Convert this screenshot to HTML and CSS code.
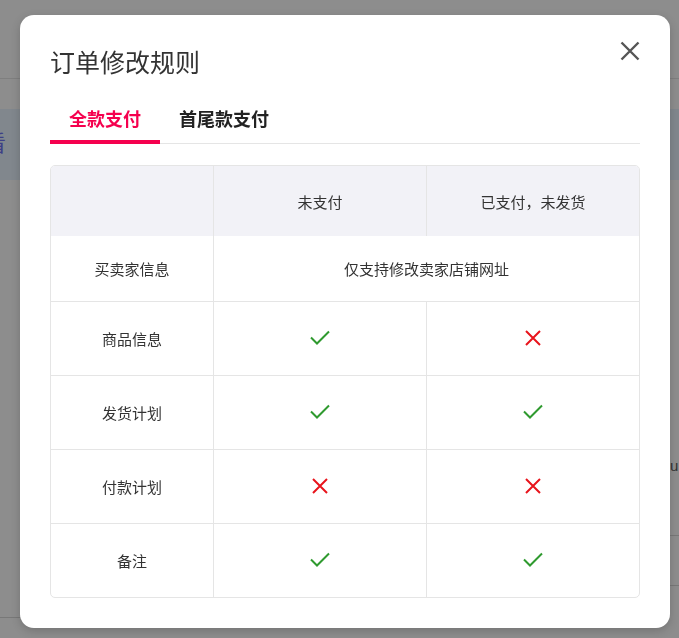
FILE: index.html
```html
<!DOCTYPE html>
<html lang="zh-CN">
<head>
<meta charset="utf-8">
<title>订单修改规则</title>
<link rel="stylesheet" href="styles.css">
</head>
<body>
<div class="page">
  <div class="topbar"></div>
  <div class="band"><span class="band-text">查看</span></div>
  <div class="stub-right stub-u"><span>u</span></div>
  <div class="stub-right stub-line1"></div>
  <div class="stub-right stub-line2"></div>
  <div class="stub-left"></div>
</div>

<div class="modal">
  <button class="close" aria-label="关闭">
    <svg width="20" height="20" viewBox="0 0 20 20"><path d="M1.5 1.5L18.5 18.5M18.5 1.5L1.5 18.5" stroke="#555" stroke-width="2.4" stroke-linecap="butt" fill="none"/></svg>
  </button>
  <h1 class="title">订单修改规则</h1>
  <div class="tabs">
    <div class="tab active">全款支付</div>
    <div class="tab">首尾款支付</div>
  </div>
  <div class="grid">
    <div class="cell head"></div>
    <div class="cell head">未支付</div>
    <div class="cell head last">已支付，未发货</div>

    <div class="cell r1">买卖家信息</div>
    <div class="cell r1 span last">仅支持修改卖家店铺网址</div>

    <div class="cell">商品信息</div>
    <div class="cell"><svg class="ok" width="20" height="15" viewBox="0 0 20 15"><path d="M1 7.5L7 13.5L19 1.5" stroke="#2f9a2f" stroke-width="2" fill="none"/></svg></div>
    <div class="cell last"><svg class="no" width="16" height="16" viewBox="0 0 16 16"><path d="M1 1L15 15M15 1L1 15" stroke="#e8141c" stroke-width="2" fill="none"/></svg></div>

    <div class="cell">发货计划</div>
    <div class="cell"><svg class="ok" width="20" height="15" viewBox="0 0 20 15"><path d="M1 7.5L7 13.5L19 1.5" stroke="#2f9a2f" stroke-width="2" fill="none"/></svg></div>
    <div class="cell last"><svg class="ok" width="20" height="15" viewBox="0 0 20 15"><path d="M1 7.5L7 13.5L19 1.5" stroke="#2f9a2f" stroke-width="2" fill="none"/></svg></div>

    <div class="cell">付款计划</div>
    <div class="cell"><svg class="no" width="16" height="16" viewBox="0 0 16 16"><path d="M1 1L15 15M15 1L1 15" stroke="#e8141c" stroke-width="2" fill="none"/></svg></div>
    <div class="cell last"><svg class="no" width="16" height="16" viewBox="0 0 16 16"><path d="M1 1L15 15M15 1L1 15" stroke="#e8141c" stroke-width="2" fill="none"/></svg></div>

    <div class="cell bottom">备注</div>
    <div class="cell bottom"><svg class="ok" width="20" height="15" viewBox="0 0 20 15"><path d="M1 7.5L7 13.5L19 1.5" stroke="#2f9a2f" stroke-width="2" fill="none"/></svg></div>
    <div class="cell bottom last"><svg class="ok" width="20" height="15" viewBox="0 0 20 15"><path d="M1 7.5L7 13.5L19 1.5" stroke="#2f9a2f" stroke-width="2" fill="none"/></svg></div>
  </div>
</div>
</body>
</html>
```

FILE: styles.css
```css
* { box-sizing: border-box; }
html, body {
  margin: 0;
  padding: 0;
  width: 679px;
  height: 638px;
  overflow: hidden;
  background: #8d8d8d;
  font-family: "Noto Sans CJK SC", "Noto Sans", sans-serif;
}
.page {
  width: 679px;
  height: 638px;
  display: flex;
  flex-direction: column;
}
.topbar {
  height: 79px;
  border-bottom: 1px solid #7f7f7f;
}
.band {
  margin-top: 30px;
  height: 71px;
  background: #81878d;
  display: flex;
  align-items: flex-start;
  padding-top: 17px;
  overflow: hidden;
}
.band-text {
  margin-left: -38px;
  font-size: 22px;
  line-height: 30px;
  color: #3d3f86;
  white-space: nowrap;
}
.stub-right {
  margin-left: 640px;
}
.stub-u {
  margin-top: 276px;
  height: 20px;
  font-family: "Liberation Sans", sans-serif;
  font-size: 15px;
  line-height: 20px;
  color: #333;
  padding-left: 30px;
}
.stub-line1 {
  margin-top: 59px;
  border-top: 1px solid #787878;
}
.stub-line2 {
  margin-top: 49px;
  border-top: 1px solid #787878;
}
.stub-left {
  margin-top: 31px;
  width: 40px;
  border-top: 1px solid #787878;
}

.modal {
  position: fixed;
  left: 20px;
  top: 15px;
  width: 650px;
  height: 613px;
  background: #fff;
  border-radius: 14px;
  box-shadow: 0 3px 10px rgba(0,0,0,0.18);
  padding: 30px 30px 0 30px;
}
.close {
  position: absolute;
  right: 30px;
  top: 26px;
  width: 20px;
  height: 20px;
  padding: 0;
  border: 0;
  background: none;
  display: flex;
}
.title {
  margin: 0;
  font-size: 25px;
  line-height: 32px;
  font-weight: 400;
  color: #333;
}
.tabs {
  margin-top: 19px;
  display: flex;
  border-bottom: 1px solid #e5e5e5;
}
.tab {
  height: 48px;
  padding: 0 19px;
  font-size: 18px;
  line-height: 44px;
  font-weight: 700;
  color: #222;
  border-bottom: 4px solid transparent;
  margin-bottom: -1px;
}
.tab.active {
  color: #f5004e;
  border-bottom-color: #f5004e;
}
.grid {
  margin-top: 21px;
  display: grid;
  grid-template-columns: 163px 213px 1fr;
  grid-template-rows: 70px 66px 74px 74px 74px 73px;
  border: 1px solid #e5e5e5;
  border-radius: 5px;
  overflow: hidden;
}
.cell {
  display: flex;
  align-items: center;
  justify-content: center;
  font-size: 15px;
  color: #333;
  border-right: 1px solid #e5e5e5;
  border-bottom: 1px solid #e5e5e5;
}
.cell.head {
  background: #f2f2f7;
  border-bottom: 0;
}
.cell.last { border-right: 0; }
.cell.bottom { border-bottom: 0; }
.cell.span { grid-column: 2 / 4; }
.ok { margin-top: -2px; }
.no { margin-top: -2px; }
```
